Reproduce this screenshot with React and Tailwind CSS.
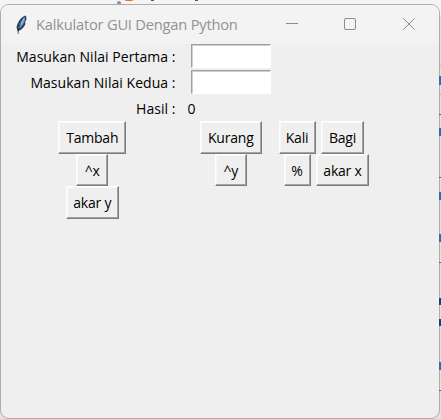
import React from "react";

function TkButton({ children, className = "" }) {
  return (
    <button
      type="button"
      className={`flex h-full items-center justify-center whitespace-nowrap border border-t-white border-l-white border-r-[#7c7c7c] border-b-[#7c7c7c] bg-[#efefef] shadow-[inset_-1px_-1px_0_#a4a4a4,inset_1px_1px_0_#f8f8f8] ${className}`}
    >
      <span className="pt-px leading-5 tracking-[-0.2px]">{children}</span>
    </button>
  );
}

function Entry() {
  return (
    <input
      type="text"
      className="h-6 w-20 border border-t-[#a0a0a0] border-l-[#a0a0a0] border-r-white border-b-white bg-white shadow-[inset_1px_1px_0_#cfcfcf] outline-none"
    />
  );
}

function Label({ children }) {
  return (
    <div className="w-full whitespace-nowrap pt-0.5 pr-[8px] text-right leading-5 tracking-[0.04px]">
      {children}
    </div>
  );
}

function Feather() {
  return (
    <svg width="13" height="20" viewBox="0 0 13 20" className="shrink-0">
      <path d="M11 .5C7 1 3 6 1.500 12L2.500 16.500C7 15 10 11 10.500 8.500L10 7.500 11.500 4Z" fill="#2f4054" />
      <path d="M10.300 1.800C6.500 4 4.500 8 3.300 12.500L5 13.200 8.500 9 10 5Z" fill="#5793d4" />
      <path d="M8.500 3.500C5 7 3.500 12 3 19" fill="none" stroke="#26323e" strokeWidth="0.700" />
      <path d="M9 3.500 6 9.500" stroke="#8ebcf0" strokeWidth="1.400" />
    </svg>
  );
}

function TitleBar() {
  return (
    <div className="flex h-[39px] shrink-0 items-center bg-[#f3f3f3] pl-[14px]">
      <Feather />
      <span className="-mt-px ml-[8px] w-[235px] whitespace-nowrap font-['Open_Sans',sans-serif] text-[14.7px] leading-5 tracking-[-0.22px] text-[#929292]">
        Kalkulator GUI Dengan Python
      </span>
      <svg width="150" height="16" viewBox="0 0 150 16" fill="none" stroke="#8c8c8c" className="-mt-px">
        <path d="M15 7.500H27" />
        <rect x="73.500" y="2.500" width="11" height="11" rx="1.500" />
        <path d="M132.300 2.300 143.700 13.700M143.700 2.300 132.300 13.700" />
      </svg>
    </div>
  );
}

const edgeMarks = [
  { y: 65, h: 1, c: "bg-[#b5b5b5]" },
  { y: 76, h: 9, c: "bg-[#2772ae]" },
  { y: 94, h: 1, c: "bg-[#aaaaaa]" },
  { y: 114, h: 1, c: "bg-[#24699f]" },
  { y: 128, h: 8, c: "bg-[#2772ae]" },
  { y: 177, h: 1, c: "bg-[#24699f]" },
  { y: 192, h: 8, c: "bg-[#2772ae]" },
  { y: 234, h: 8, c: "bg-[#2772ae]" },
  { y: 262, h: 1, c: "bg-[#2772ae]" },
  { y: 298, h: 7, c: "bg-[#173f7b]" },
  { y: 319, h: 7, c: "bg-[#173f7b]" },
  { y: 362, h: 8, c: "bg-[#2772ae]" },
  { y: 390, h: 1, c: "bg-[#2772ae]" },
];

export default function App() {
  return (
    <div className="relative h-[419px] w-[441px] overflow-hidden bg-[#e2e2e2] pt-1 font-['Open_Sans',sans-serif] text-black">
      <div className="absolute inset-x-0 top-0 h-4 bg-[#f4f4f4]" />
      <div className="absolute left-[117px] top-[1px] h-1 w-1 rounded-full bg-[#929292]" />
      <div className="absolute -top-[10px] left-[122px] h-[11px] w-[14px] rounded-full bg-[#f26a21]" />
      <div className="absolute left-[151px] top-0 h-px w-[3px] bg-[#555555]" />
      <div className="absolute left-[195px] top-0 h-px w-[3px] bg-[#555555]" />
      <div className="relative flex h-[415px] w-[440px] flex-col overflow-hidden rounded-[9px] border border-[#adadad] bg-[#efefef]">
        <TitleBar />
        <div className="-mt-px grid grid-cols-[182.5px_94.5px_38px_53px] grid-rows-[26px_26px_26px_32.700px_32.700px_32.700px] items-center justify-items-center text-[14px]">
          <Label>Masukan Nilai Pertama :</Label>
          <Entry />
          <div className="col-span-2" />

          <Label>Masukan Nilai Kedua :</Label>
          <Entry />
          <div className="col-span-2" />

          <Label>Hasil :</Label>
          <div className="w-full pt-0.5 pl-[4px] leading-5">0</div>
          <div className="col-span-2" />

          <TkButton className="w-[68px]">Tambah</TkButton>
          <TkButton className="w-[62px]">Kurang</TkButton>
          <TkButton className="w-[37px]">Kali</TkButton>
          <TkButton className="w-[43px]">Bagi</TkButton>

          <TkButton className="w-[32px]">^x</TkButton>
          <TkButton className="w-[32px]">^y</TkButton>
          <TkButton className="w-[27px]">%</TkButton>
          <TkButton className="w-[53px]">akar x</TkButton>

          <TkButton className="w-[53px]">akar y</TkButton>
        </div>
      </div>
      {edgeMarks.map((m) => (
        <div
          key={m.y}
          className={`absolute right-0 w-[2px] ${m.c}`}
          style={{ top: m.y, height: m.h }}
        />
      ))}
    </div>
  );
}
